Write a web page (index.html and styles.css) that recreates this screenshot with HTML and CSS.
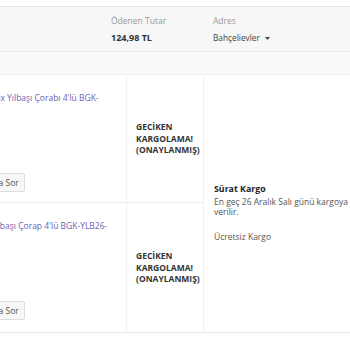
FILE: index.html
```html
<!DOCTYPE html>
<html lang="tr">
<head>
  <meta charset="UTF-8" />
  <meta name="viewport" content="width=device-width, initial-scale=1.0" />
  <title>Siparişlerim</title>
  <link rel="stylesheet" href="styles.css">
</head>
<body>
  <div class="order">
    <div class="summary">
      <div class="summary-item summary-item-first">
        <span class="summary-label">Sipariş Tarihi</span>
        <span class="summary-value">20 Aralık</span>
      </div>
      <div class="summary-item">
        <span class="summary-label">Ödenen Tutar</span>
        <span class="summary-value">124,98 TL</span>
      </div>
      <div class="summary-item">
        <span class="summary-label">Adres</span>
        <span class="summary-value summary-address">Bahçelievler
          <svg class="caret" width="5" height="3" viewBox="0 0 5 3"><path d="M0 0h5L2.5 3z" fill="#444"/></svg>
        </span>
      </div>
    </div>

    <div class="group-bar"></div>

    <div class="items">
      <div class="product">
        <div class="thumb"></div>
        <div class="product-info">
          <a class="product-name" href="#">Bgk 4'lü Unisex Yılbaşı Çorabı 4'lü BGK-YLB24-01</a>
          <button class="ask-btn">Ürünü Satıcıya Sor</button>
        </div>
      </div>
      <div class="status">GECİKEN KARGOLAMA! (ONAYLANMIŞ)</div>
      <div class="shipping">
        <div class="cargo-name">Sürat Kargo</div>
        <div class="cargo-date">En geç 26 Aralık Salı günü kargoya verilir.</div>
        <div class="cargo-free">Ücretsiz Kargo</div>
      </div>

      <div class="product">
        <div class="thumb"></div>
        <div class="product-info">
          <a class="product-name" href="#">Bgk Unisex Yılbaşı Çorap 4'lü BGK-YLB26-0203</a>
          <button class="ask-btn">Ürünü Satıcıya Sor</button>
        </div>
      </div>
      <div class="status">GECİKEN KARGOLAMA! (ONAYLANMIŞ)</div>
    </div>
  </div>
</body>
</html>
```

FILE: styles.css
```css
body {
  margin: 0;
  overflow: hidden;
  background: #fff;
  font-family: 'Open Sans', 'DejaVu Sans', sans-serif;
  font-size: 8.5px;
  color: #333;
}
.order {
  margin-left: -120px;
  width: 540px;
}
.summary {
  display: flex;
  margin-top: 6px;
  height: 46px;
  box-sizing: border-box;
  padding-top: 8px;
  background: #f7f7f7;
  border-top: 1px solid #e6e6e6;
  border-bottom: 1px solid #e6e6e6;
}
.summary-item {
  width: 102px;
  display: flex;
  flex-direction: column;
}
.summary-item-first {
  width: 221px;
  padding-left: 10px;
}
.summary-label {
  color: #9a9a9a;
  line-height: 12px;
}
.summary-value {
  margin-top: 5px;
  line-height: 12px;
  font-size: 9px;
  font-weight: bold;
  color: #333;
}
.summary-address {
  font-weight: normal;
  font-size: 8.3px;
  color: #444;
}
.caret {
  margin-left: 3px;
  vertical-align: middle;
}
.group-bar {
  height: 22px;
  background: #fafafa;
  border-bottom: 1px solid #ececec;
}
.items {
  display: grid;
  grid-template-columns: 246px 77px 1fr;
  grid-template-rows: 128px 129px;
  border-bottom: 1px solid #e8e8e8;
}
.product {
  display: flex;
  gap: 5px;
  padding: 17px 12px 0 10px;
  border-bottom: 1px solid #ececec;
}
.items .product:nth-of-type(4),
.items .product:nth-of-type(4) + .status {
  border-bottom: none;
}
.thumb {
  width: 50px;
  height: 60px;
  flex: none;
  background: #f2f2f2;
}
.product-info {
  display: flex;
  flex-direction: column;
  align-items: flex-start;
}
.product-name {
  color: #6e60b3;
  text-decoration: none;
  line-height: 11px;
  height: 22px;
  overflow: hidden;
}
.ask-btn {
  margin: 59px 0 0 -5px;
  height: 19px;
  padding: 0 5px;
  font-family: inherit;
  font-size: 8.5px;
  color: #555;
  background: #f6f6f6;
  border: 1px solid #dcdcdc;
  border-radius: 2px;
}
.status {
  display: flex;
  align-items: center;
  padding: 0 6px 0 9px;
  font-weight: bold;
  line-height: 11.5px;
  color: #333;
  border-left: 1px solid #f1f1f1;
  border-bottom: 1px solid #ececec;
}
.shipping {
  grid-column: 3;
  grid-row: 1 / span 2;
  display: flex;
  flex-direction: column;
  justify-content: center;
  padding: 17px 0 0 10px;
  width: 150px;
  border-left: 1px solid #f1f1f1;
}
.cargo-name {
  font-size: 8.8px;
  font-weight: bold;
  color: #222;
  line-height: 12px;
}
.cargo-date {
  margin-top: 2px;
  font-size: 8.5px;
  line-height: 10.5px;
  color: #555;
}
.cargo-free {
  margin-top: 13px;
  font-size: 8.5px;
  color: #555;
}
```
